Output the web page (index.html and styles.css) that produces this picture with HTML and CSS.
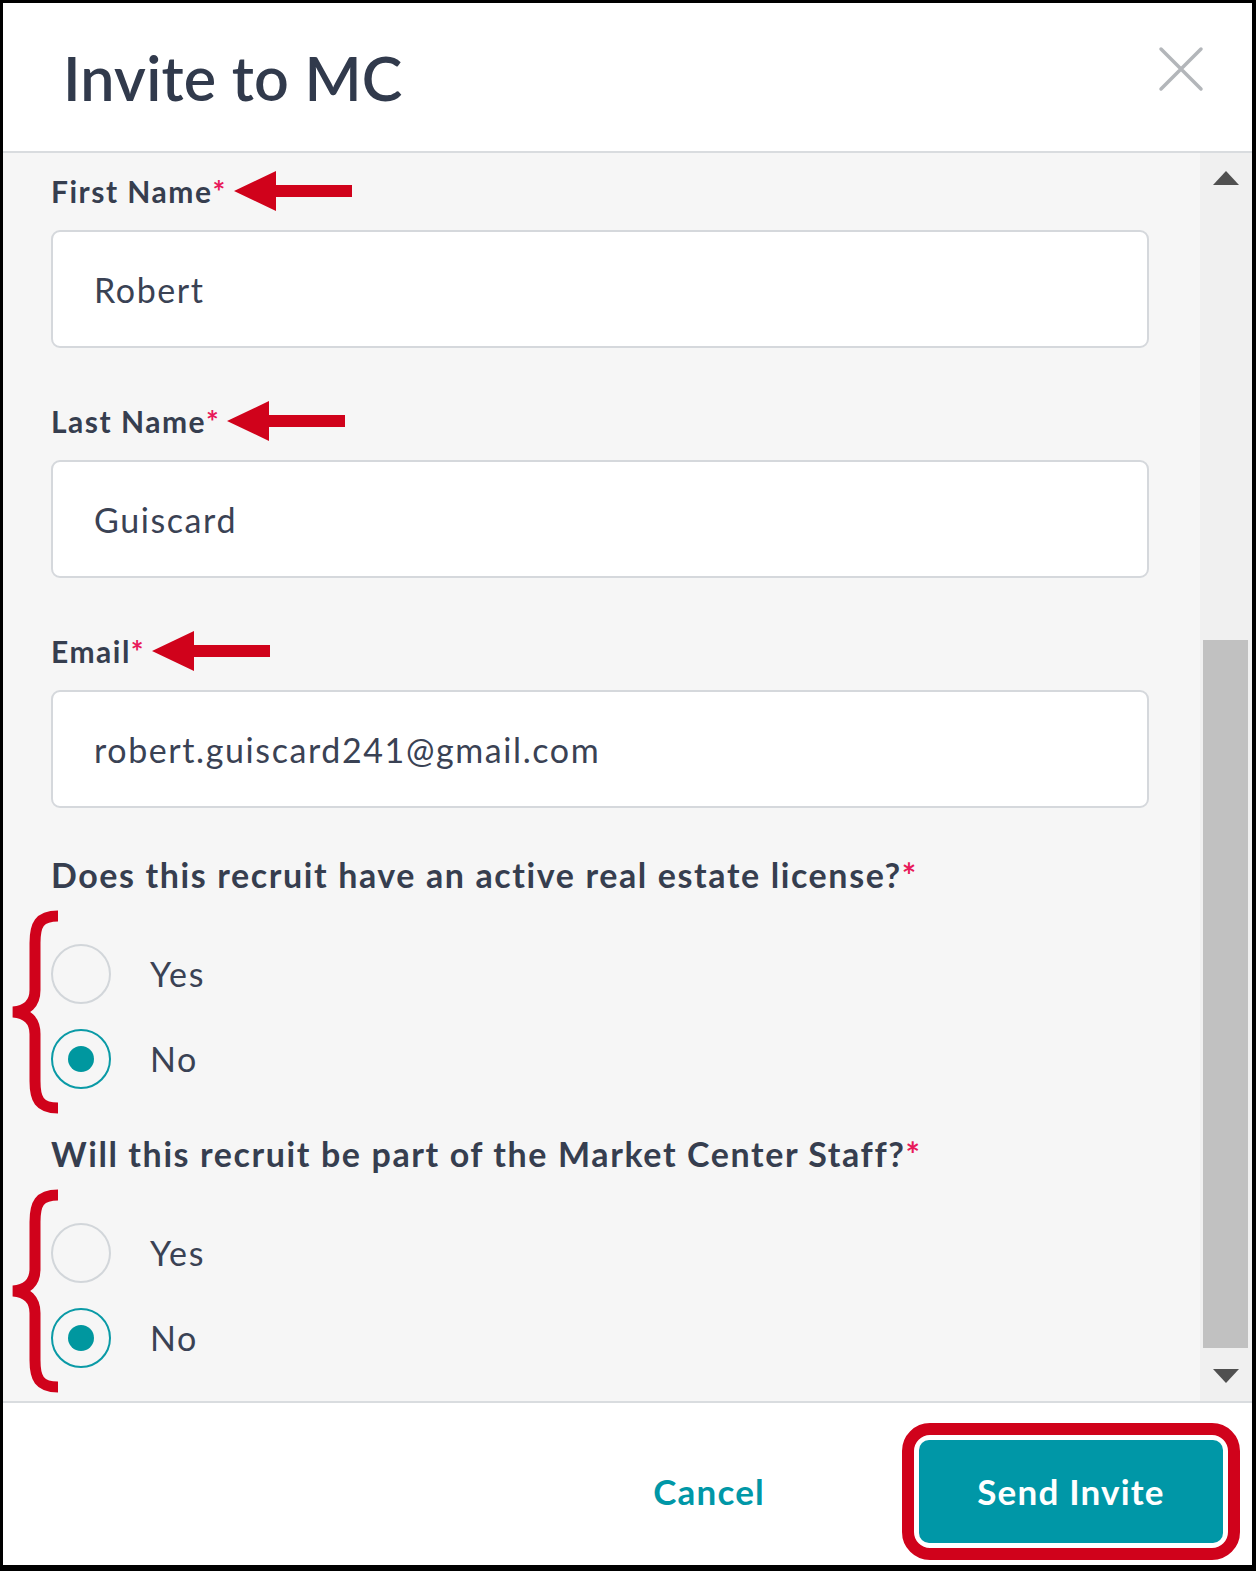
FILE: index.html
```html
<!DOCTYPE html>
<html lang="en">
<head>
<meta charset="utf-8">
<title>Invite to MC</title>
<link rel="stylesheet" href="styles.css">
</head>
<body>
<div class="modal">
  <header class="modal-header">
    <h1 class="title">Invite to MC</h1>
    <button class="close" aria-label="Close">
      <svg width="46" height="46" viewBox="0 0 46 46"><path d="M3 3 L43 43 M43 3 L3 43" stroke="#b3b6ba" stroke-width="3.5" stroke-linecap="round" fill="none"/></svg>
    </button>
  </header>
  <div class="modal-body">
    <div class="content">
      <div class="field">
        <label class="field-label">First Name<span class="req">*</span><svg class="arrow" width="118" height="40" viewBox="0 0 118 40"><polygon points="0,20 42,0 42,14 118,14 118,26 42,26 42,40" fill="#d0021b"/></svg></label>
        <div class="input">Robert</div>
      </div>
      <div class="field">
        <label class="field-label">Last Name<span class="req">*</span><svg class="arrow" width="118" height="40" viewBox="0 0 118 40"><polygon points="0,20 42,0 42,14 118,14 118,26 42,26 42,40" fill="#d0021b"/></svg></label>
        <div class="input">Guiscard</div>
      </div>
      <div class="field">
        <label class="field-label">Email<span class="req">*</span><svg class="arrow" width="118" height="40" viewBox="0 0 118 40"><polygon points="0,20 42,0 42,14 118,14 118,26 42,26 42,40" fill="#d0021b"/></svg></label>
        <div class="input">robert.guiscard241@gmail.com</div>
      </div>
      <div class="question">
        <div class="question-label">Does this recruit have an active real estate license?<span class="req">*</span></div>
        <div class="options">
          <svg class="brace" width="52" height="204" viewBox="0 0 52 204"><path d="M49 6 C30 6 26 15 26 33 L26 80 C26 94 18 101 4 102 C18 103 26 110 26 124 L26 171 C26 189 30 198 49 198" fill="none" stroke="#d0021b" stroke-width="11"/></svg>
          <div class="option"><span class="radio"></span><span class="opt-text">Yes</span></div>
          <div class="option"><span class="radio checked"></span><span class="opt-text">No</span></div>
        </div>
      </div>
      <div class="question">
        <div class="question-label">Will this recruit be part of the Market Center Staff?<span class="req">*</span></div>
        <div class="options">
          <svg class="brace" width="52" height="204" viewBox="0 0 52 204"><path d="M49 6 C30 6 26 15 26 33 L26 80 C26 94 18 101 4 102 C18 103 26 110 26 124 L26 171 C26 189 30 198 49 198" fill="none" stroke="#d0021b" stroke-width="11"/></svg>
          <div class="option"><span class="radio"></span><span class="opt-text">Yes</span></div>
          <div class="option"><span class="radio checked"></span><span class="opt-text">No</span></div>
        </div>
      </div>
    </div>
    <div class="scrollbar">
      <div class="scroll-btn"><svg width="26" height="14" viewBox="0 0 26 14"><polygon points="13,0 26,14 0,14" fill="#505050"/></svg></div>
      <div class="track"><div class="thumb"></div></div>
      <div class="scroll-btn"><svg width="26" height="14" viewBox="0 0 26 14"><polygon points="0,0 26,0 13,14" fill="#505050"/></svg></div>
    </div>
  </div>
  <footer class="modal-footer">
    <button class="cancel">Cancel</button>
    <div class="highlight">
      <button class="send">Send Invite</button>
    </div>
  </footer>
</div>
</body>
</html>
```
FILE: styles.css
```css
* { box-sizing: border-box; }
html, body { margin: 0; padding: 0; background: #fff; }
body { font-family: Lato, "Noto Sans", sans-serif; color: #343c4e; }

.modal {
  width: 1256px;
  height: 1571px;
  border: 3px solid #000;
  border-right-width: 4px;
  border-bottom-width: 6px;
  display: flex;
  flex-direction: column;
  background: #fff;
}

.modal-header {
  height: 150px;
  flex: none;
  display: flex;
  justify-content: space-between;
  align-items: center;
  padding: 0 48px 0 60px;
  border-bottom: 2px solid #d9dcdf;
}
.title {
  margin: 0;
  font-size: 61px;
  font-weight: 600;
  color: #313a4c;
  letter-spacing: 0.2px;
}
.close {
  align-self: flex-start;
  margin-top: 43px;
  background: none;
  border: 0;
  padding: 0;
  line-height: 0;
}

.modal-body {
  height: 1248px;
  flex: none;
  display: flex;
  background: #f6f6f6;
  overflow: hidden;
}
.content {
  flex: 1;
  padding: 20px 51px 0 48px;
}

.field { margin-bottom: 55px; }
.field-label {
  display: flex;
  align-items: center;
  height: 36px;
  font-size: 30px;
  font-weight: 700;
  letter-spacing: 1.5px;
  margin-bottom: 21px;
  color: #363e4f;
}
.req { color: #e8195a; }
.arrow { margin-left: 7px; flex: none; }

.input {
  height: 118px;
  background: #fff;
  border: 2px solid #d5d8dc;
  border-radius: 9px;
  display: flex;
  align-items: center;
  padding-left: 41px;
  font-size: 34px;
  letter-spacing: 1.6px;
  color: #3a4254;
}

.question { margin-top: -8px; margin-bottom: 41px; }
.question-label {
  font-size: 34px;
  font-weight: 700;
  letter-spacing: 1.6px;
  line-height: 40px;
  color: #363e4f;
}
.options {
  position: relative;
  margin-top: 36px;
}
.brace {
  position: absolute;
  left: -42px;
  top: -21px;
}
.option {
  height: 85px;
  display: flex;
  align-items: center;
}
.radio {
  width: 60px;
  height: 60px;
  border-radius: 50%;
  border: 2px solid #d2d6da;
  background: transparent;
  display: flex;
  align-items: center;
  justify-content: center;
  flex: none;
}
.radio.checked { border-color: #0a9aa6; }
.radio.checked::after {
  content: "";
  width: 26px;
  height: 26px;
  border-radius: 50%;
  background: #00979f;
}
.opt-text {
  margin-left: 39px;
  font-size: 34px;
  letter-spacing: 1.6px;
  color: #3a4254;
}

.scrollbar {
  width: 52px;
  flex: none;
  background: #f0f0f0;
  display: flex;
  flex-direction: column;
  align-items: center;
}
.scroll-btn {
  height: 50px;
  display: flex;
  align-items: center;
  justify-content: center;
  flex: none;
}
.track {
  flex: 1;
  width: 100%;
  padding: 437px 4px 0 3px;
}
.thumb {
  height: 708px;
  background: #c1c1c1;
}

.modal-footer {
  flex: 1;
  display: flex;
  align-items: center;
  justify-content: flex-end;
  padding: 14px 12px 0 0;
  border-top: 2px solid #d9dcdf;
  min-height: 0;
}
.cancel {
  background: none;
  border: 0;
  font-family: Lato, "Noto Sans", sans-serif;
  font-size: 35px;
  font-weight: 700;
  letter-spacing: 1.2px;
  color: #0097a7;
  margin-right: 137px;
  padding: 0;
}
.highlight {
  border: 12px solid #d0021b;
  border-radius: 28px;
  padding: 5px;
  background: #fff;
}
.send {
  display: block;
  width: 304px;
  height: 103px;
  background: #0097a7;
  color: #fff;
  border: 0;
  border-radius: 10px;
  font-family: Lato, "Noto Sans", sans-serif;
  font-size: 35px;
  font-weight: 700;
  letter-spacing: 1.2px;
}
```
